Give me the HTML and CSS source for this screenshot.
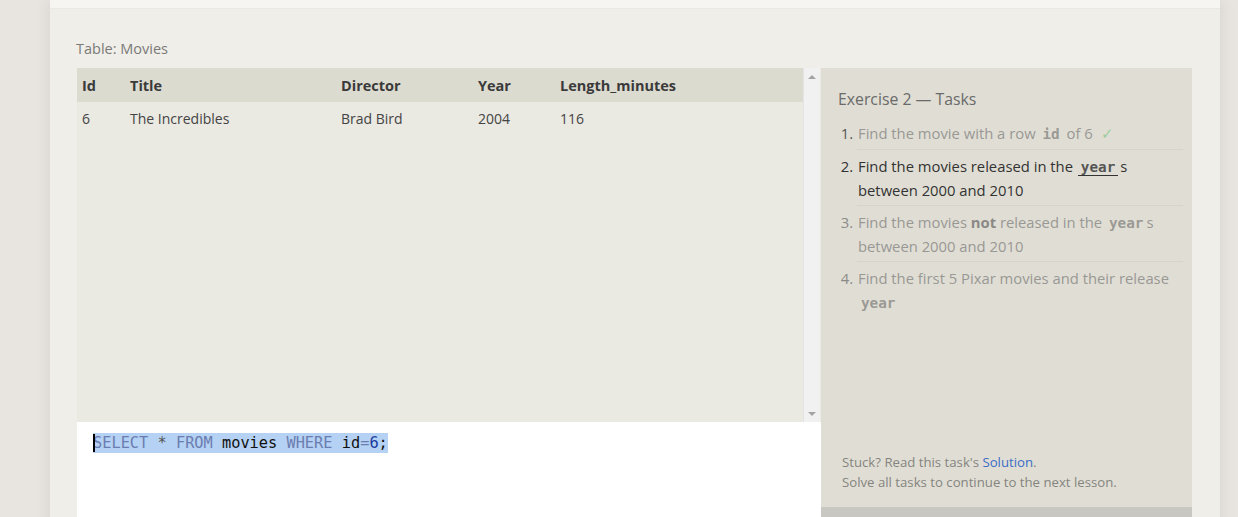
FILE: index.html
```html
<!DOCTYPE html>
<html>
<head>
<meta charset="utf-8">
<link rel="stylesheet" href="styles.css">
</head>
<body>
<div class="page">
  <div class="topbar"></div>
  <div class="content">
    <div class="label">Table: Movies</div>
    <div class="work">
      <div class="leftcol">
        <div class="viewer">
          <div class="tablewrap">
            <table class="results">
              <colgroup>
                <col class="c-id"><col class="c-title"><col class="c-dir"><col class="c-year"><col class="c-len">
              </colgroup>
              <thead>
                <tr><th>Id</th><th>Title</th><th>Director</th><th>Year</th><th>Length_minutes</th></tr>
              </thead>
              <tbody>
                <tr><td>6</td><td>The Incredibles</td><td>Brad Bird</td><td>2004</td><td>116</td></tr>
              </tbody>
            </table>
          </div>
          <div class="scrollbar">
            <span class="arrow up"></span>
            <span class="arrow down"></span>
          </div>
        </div>
        <div class="editor"><span class="sel"><span class="cursor"></span><span class="kw">SELECT</span> <span class="op">*</span> <span class="kw">FROM</span> movies <span class="kw">WHERE</span> id<span class="kw">=</span><span class="num">6</span>;</span></div>
      </div>
      <div class="side">
        <div class="tasks">
          <div class="tasks-title">Exercise 2 — Tasks</div>
          <ol class="task-list">
            <li class="done">Find the movie with a row <code>id</code> of 6 <span class="check">✓</span></li>
            <li class="active">Find the movies released in the <code class="ul">year</code>s between 2000 and 2010</li>
            <li class="todo">Find the movies <b>not</b> released in the <code>year</code>s between 2000 and 2010</li>
            <li class="todo">Find the first 5 Pixar movies and their release <code>year</code></li>
          </ol>
          <div class="help">
            <div>Stuck? Read this task's <a href="#">Solution</a>.</div>
            <div>Solve all tasks to continue to the next lesson.</div>
          </div>
        </div>
        <div class="continue"></div>
      </div>
    </div>
  </div>
</div>
</body>
</html>
```

FILE: styles.css
```css
* { box-sizing: border-box; }
html, body { margin: 0; padding: 0; }
body {
  background: #e8e5e1;
  font-family: "Open Sans", "Noto Sans", sans-serif;
  height: 517px;
  overflow: hidden;
}
.page {
  width: 1170px;
  margin-left: 50px;
  background: #f0eee8;
  min-height: 517px;
  box-shadow: -6px 0 10px rgba(0,0,0,0.04), 6px 0 10px rgba(0,0,0,0.04);
}
.topbar {
  height: 9px;
  background: #f7f5f1;
  border-bottom: 1px solid #ebe9e3;
}
.content {
  padding: 29px 28px 0 26px;
}
.label {
  font-size: 14.5px;
  line-height: 20px;
  padding-top: 1px;
  color: #7a7a78;
  margin-bottom: 9px;
}
.work {
  display: flex;
  margin-left: 1px;
}
.leftcol {
  width: 744px;
  display: flex;
  flex-direction: column;
}
.viewer {
  display: flex;
  height: 354px;
  background: #eae9e2;
}
.tablewrap {
  width: 726px;
}
.results {
  border-collapse: collapse;
  table-layout: fixed;
  width: 726px;
  font-size: 14px;
  color: #333;
}
.c-id { width: 48px; }
.c-title { width: 211px; }
.c-dir { width: 137px; }
.c-year { width: 82px; }
.c-len { width: 248px; }
.results th {
  background: #dcdbd0;
  text-align: left;
  font-weight: 700;
  font-size: 14.5px;
  height: 34px;
  padding: 0 5px;
  color: #3a3a3a;
}
.results td {
  height: 33px;
  padding: 0 5px;
  color: #444;
}
.scrollbar {
  width: 17px;
  background: #f1f1f1;
  border-left: 1px solid #e4e4e4;
  display: flex;
  flex-direction: column;
  justify-content: space-between;
  align-items: center;
  padding: 7px 0 6px;
}
.arrow {
  width: 0;
  height: 0;
  border-left: 4px solid transparent;
  border-right: 4px solid transparent;
}
.arrow.up { border-bottom: 4px solid #a3a3a3; }
.arrow.down { border-top: 4px solid #a3a3a3; }
.editor {
  background: #fff;
  height: 120px;
  padding: 11px 16px;
  font-family: "DejaVu Sans Mono", monospace;
  font-size: 15.3px;
  color: #111;
}
.sel {
  display: inline-block;
  position: relative;
  line-height: 20px;
  height: 20px;
  background: #b5d1f3;
}
.cursor {
  position: absolute;
  left: 0;
  top: 1px;
  width: 2px;
  height: 18px;
  background: #000;
}
.kw { color: #6b7db0; }
.op { color: #555; }
.num { color: #1a3aa0; }
.side {
  width: 371px;
  display: flex;
  flex-direction: column;
}
.tasks {
  height: 439px;
  background: #e0ded4;
  display: flex;
  flex-direction: column;
  padding: 19px 9px 15px 17px;
}
.tasks-title {
  font-size: 15.8px;
  line-height: 24px;
  color: #6a6a6a;
  margin-bottom: 6px;
}
.task-list {
  margin: 0;
  padding: 0 0 0 19px;
  font-size: 14.8px;
  line-height: 24px;
}
.task-list li {
  padding: 4px 0 3px 1px;
  border-top: 1px solid #d6d4ca;
}
.task-list li:first-child { border-top: none; padding-top: 4px; padding-bottom: 4px; }
.task-list code {
  font-family: "DejaVu Sans Mono", monospace;
  font-weight: 700;
  font-size: 14.3px;
  line-height: 1;
  margin: 0 3px;
}
.done, .todo { color: #999894; }
.done::marker { color: #555; }
.todo::marker { color: #8a8a88; }
.active { color: #333; }
.active::marker { color: #333; }
.done code, .todo code { color: #9a9994; }
.active code { color: #555; }
.ul {
  border-bottom: 1px solid #333;
  padding: 0 3px 0 3px;
  margin-left: 1px !important;
  margin-right: 2px !important;
}
.todo b { color: #8a8986; }
.check { color: #9fcc9f; padding-left: 4px; }
.help {
  margin-top: auto;
  font-size: 13.2px;
  line-height: 20px;
  color: #858480;
  padding-left: 4px;
}
.help a { color: #3b6cc7; text-decoration: none; }
.continue {
  height: 40px;
  background: #c8c7c2;
}
```
